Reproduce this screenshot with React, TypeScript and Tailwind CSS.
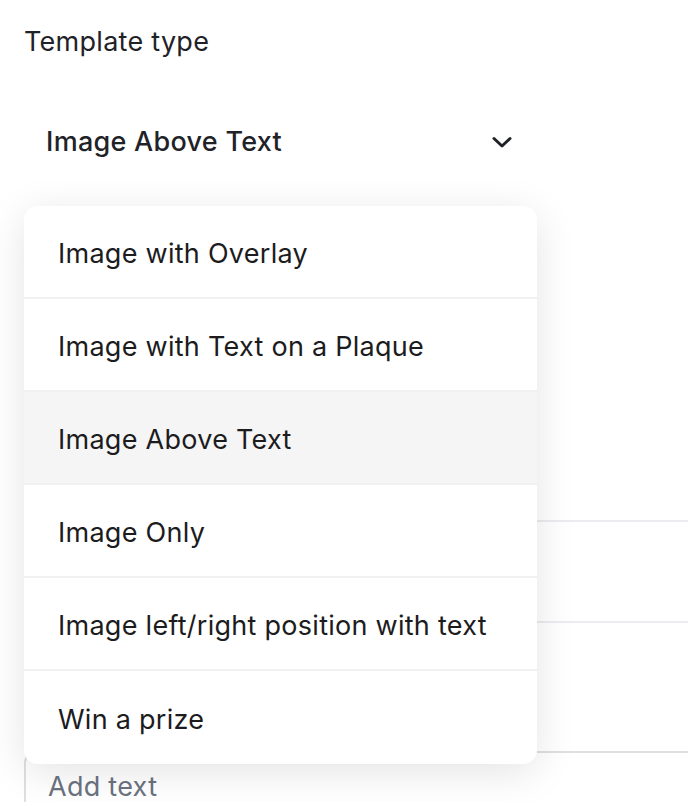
import { useState } from 'react';

const OPTIONS = [
  'Image with Overlay',
  'Image with Text on a Plaque',
  'Image Above Text',
  'Image Only',
  'Image left/right position with text',
  'Win a prize',
];

function Chevron() {
  return (
    <svg width="22" height="14" viewBox="0 0 22 14" fill="none" aria-hidden>
      <path d="M3 3.5 L11 11 L19 3.5" stroke="#1f2328" strokeWidth="3" strokeLinecap="round" strokeLinejoin="round" />
    </svg>
  );
}

export default function App() {
  const [selected] = useState('Image Above Text');

  return (
    <div className="relative h-[802px] w-[688px] overflow-hidden bg-white font-['Inter','Liberation_Sans',sans-serif] text-[#1f2328]">
      {/* Form behind the open menu */}
      <div className="pl-6 pt-[26px]">
        <div className="text-[27px] leading-[32px] tracking-[0.01em]">Template type</div>

        <button className="mt-[58px] flex h-[52px] w-[513px] items-center justify-between pl-[22px] pr-[24px]">
          <span className="text-[27px] font-medium leading-[32px] tracking-[0.01em]">{selected}</span>
          <Chevron />
        </button>

        <div className="mt-[352px] h-[103px] w-[720px] rounded-xl border-2 border-[#ebebf0]" />

        <div className="mt-[128px] flex h-[80px] w-[720px] items-start rounded-xl border-2 border-[#dedee3] pl-[22px] pt-[18px]">
          <span className="text-[27px] leading-[32px] tracking-[0.01em] text-[#6b7280]">Add text</span>
        </div>
      </div>

      {/* Dropdown menu */}
      <div className="absolute left-6 top-[206px] w-[513px] overflow-hidden rounded-[14px] bg-white shadow-[0_8px_40px_rgba(0,0,0,0.11)]">
        {OPTIONS.map((opt, i) => (
          <div
            key={opt}
            className={`flex h-[93px] items-center pl-[34px] pt-[4px] text-[27px] leading-[32px] tracking-[0.01em] text-[#1c1c1e] ${
              i < OPTIONS.length - 1 ? 'border-b-2 border-[#f1f1f1]' : ''
            } ${opt === selected ? 'bg-[#f5f5f5]' : ''}`}
          >
            {opt}
          </div>
        ))}
      </div>
    </div>
  );
}
